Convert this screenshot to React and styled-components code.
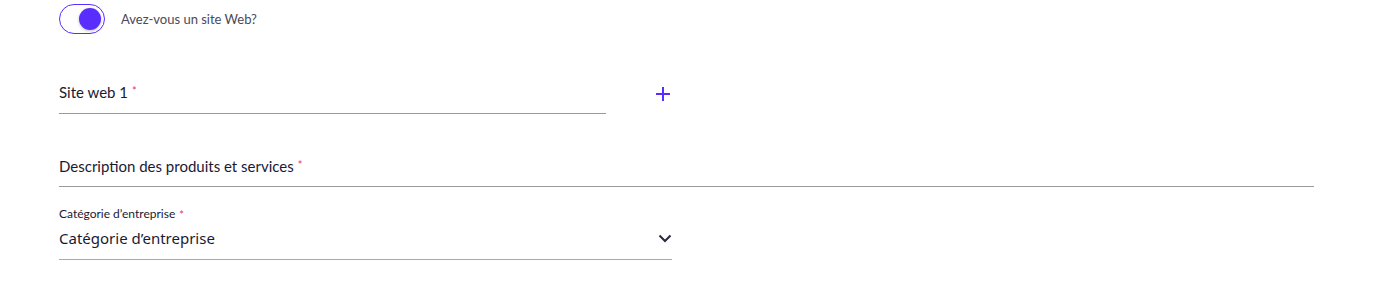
import React, { useState } from "react";
import styled, { createGlobalStyle } from "styled-components";

const GlobalStyle = createGlobalStyle`
  html, body { margin: 0; padding: 0; background: #fff; }
  body { font-family: "Lato", "Noto Sans", sans-serif; color: #1a1a33; }
`;

const Form = styled.div`
  width: 1375px;
  padding: 4px 0 0 59px;
  box-sizing: border-box;
`;

const SwitchRow = styled.label`
  display: flex;
  align-items: center;
  gap: 16px;
  height: 30px;
  cursor: pointer;
`;

const Track = styled.span`
  position: relative;
  width: 46px;
  height: 30px;
  box-sizing: border-box;
  border: 1px solid #5a2dff;
  border-radius: 15px;
  background: #fff;
`;

const Knob = styled.span`
  position: absolute;
  top: 3px;
  left: ${(p) => (p.$on ? "19px" : "3px")};
  width: 22px;
  height: 22px;
  border-radius: 50%;
  background: #5a2dff;
  box-shadow: 0 1px 3px rgba(0, 0, 0, 0.25);
  transition: left 0.15s;
`;

const SwitchText = styled.span`
  font-size: 13px;
  color: #4a4a5a;
`;

const FieldRow = styled.div`
  display: flex;
  align-items: flex-end;
  gap: 50px;
  margin-top: ${(p) => p.$mt || 0}px;
`;

const Field = styled.div`
  width: ${(p) => p.$w}px;
  border-bottom: 1px solid ${(p) => p.$line || "#9a9a9a"};
  display: flex;
  flex-direction: column;
  padding-bottom: ${(p) => p.$pb || 10}px;
`;

const Label = styled.div`
  font-size: 15px;
  line-height: 20px;
  color: #1a1a33;
`;

const SmallLabel = styled.div`
  font-size: 12px;
  line-height: 16px;
  color: #1a1a33;
`;

const Star = styled.span`
  position: relative;
  top: 2px;
  color: #e8336a;
  font-size: 11px;
  vertical-align: top;
  margin-left: 4px;
  line-height: 14px;
`;

const SelectLine = styled.div`
  display: flex;
  align-items: center;
  justify-content: space-between;
  margin-top: 5px;
`;

const Value = styled.span`
  font-family: "Noto Sans", "Open Sans", sans-serif;
  font-size: 15px;
  line-height: 22px;
  color: #1a1a33;
`;

const IconBtn = styled.button`
  border: none;
  background: none;
  padding: 0;
  margin-bottom: 13px;
  display: flex;
  cursor: pointer;
`;

export default function App() {
  const [on, setOn] = useState(true);
  return (
    <>
      <GlobalStyle />
      <Form>
        <SwitchRow onClick={() => setOn(!on)}>
          <Track>
            <Knob $on={on} />
          </Track>
          <SwitchText>Avez-vous un site Web?</SwitchText>
        </SwitchRow>

        <FieldRow $mt={48}>
          <Field $w={547} $pb={11}>
            <Label>
              Site web 1<Star>*</Star>
            </Label>
          </Field>
          <IconBtn aria-label="Ajouter">
            <svg width="14" height="14" viewBox="0 0 14 14">
              <path d="M7 0v14M0 7h14" stroke="#5a2dff" strokeWidth="2" />
            </svg>
          </IconBtn>
        </FieldRow>

        <FieldRow $mt={42}>
          <Field $w={1255} $pb={10}>
            <Label>
              Description des produits et services<Star>*</Star>
            </Label>
          </Field>
        </FieldRow>

        <FieldRow $mt={19}>
          <Field $w={613} $line="#a9a7ba" $pb={10}>
            <SmallLabel>
              Catégorie d’entreprise<Star>*</Star>
            </SmallLabel>
            <SelectLine>
              <Value>Catégorie d’entreprise</Value>
              <svg width="14" height="9" viewBox="0 0 14 9">
                <path d="M1.5 1.5l5.5 5.5 5.5-5.5" fill="none" stroke="#2b2840" strokeWidth="2" />
              </svg>
            </SelectLine>
          </Field>
        </FieldRow>
      </Form>
    </>
  );
}
